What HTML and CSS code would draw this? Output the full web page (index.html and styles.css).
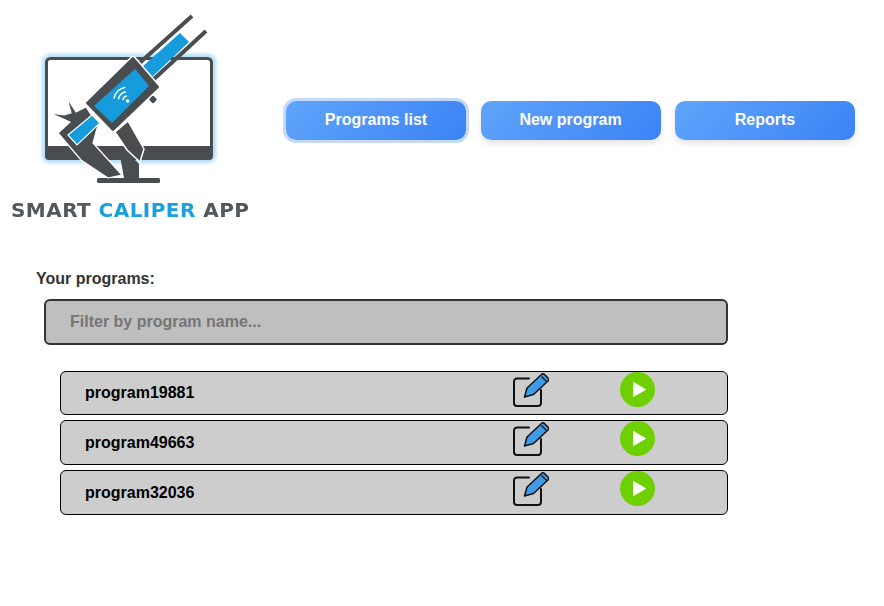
FILE: index.html
```html
<!DOCTYPE html>
<html lang="en">
<head>
  <meta charset="UTF-8" />
  <title>Smart Caliper App</title>
  <link rel="stylesheet" href="styles.css">
</head>
<body>
  <header class="top">
    <div class="logo">
      <svg class="logo-art" width="260" height="196" viewBox="0 0 260 196">
        <defs>
          <filter id="glow" x="-10%" y="-10%" width="120%" height="120%">
            <feGaussianBlur stdDeviation="2" />
          </filter>
          <filter id="soft" x="-5%" y="-5%" width="110%" height="110%">
            <feGaussianBlur stdDeviation="0.5" />
          </filter>
        </defs>
        <rect x="44.500" y="56.500" width="169" height="104" rx="5" fill="none" stroke="#5cb8f0" stroke-width="2.500" filter="url(#glow)" />
        <g filter="url(#soft)">
          <!-- monitor -->
          <rect x="46.500" y="58.500" width="165" height="100" rx="4" fill="#fff" stroke="#4a4d50" stroke-width="3" />
          <path d="M45 146h168v10a4 4 0 0 1-4 4H49a4 4 0 0 1-4-4z" fill="#4a4d50" />
          <path d="M120 156l7-4 12 12v14h-15z" fill="#4a4d50" />
          <rect x="97" y="178" width="63" height="5" rx="1.500" fill="#4a4d50" />

          <!-- rails and beam -->
          <path d="M192 16L134 68M206 31L154 79" stroke="#4a4d50" stroke-width="4" fill="none" />
          <path d="M180 33l9 9-37 35-10-10z" fill="#129bdc" />

          <!-- jaws -->
          <path d="M115 132l13-11 16 28-4 13-13-12z" fill="#4a4d50" stroke="#fff" stroke-width="1.500" />
          <path d="M67 98l9 14 10-5 12 18-5 18 29 32-14 3-27-18-23-27 12-11-20-9 14 2 7-2z" fill="#4a4d50" stroke="#fff" stroke-width="1.200" stroke-linejoin="round" />
          <path d="M68 135l24-20 8 8-23 22z" fill="#129bdc" stroke="#fff" stroke-width="1.200" />

          <!-- slider -->
          <path d="M133 58l25 29-45 43-26-27z" fill="#4a4d50" stroke="#fff" stroke-width="5" stroke-linejoin="round" />
          <path d="M133 58l25 29-45 43-26-27z" fill="#4a4d50" stroke="#4a4d50" stroke-width="2" stroke-linejoin="round" />
          <path d="M135 70l13 16-36 36-17-16z" fill="#129bdc" stroke="#129bdc" stroke-width="1.500" stroke-linejoin="round" />
          <rect x="150" y="96.500" width="6" height="6" rx="1.500" transform="rotate(45 153 99.500)" fill="#4a4d50" />

          <!-- wifi -->
          <path d="M113.900 98.500A14 14 0 0 1 125.300 87.200M118.400 99.300A9.500 9.500 0 0 1 126 91.700M122.800 100.100A5 5 0 0 1 126.800 96.100" stroke="#fff" stroke-width="1.500" fill="none" />
          <circle cx="127.700" cy="101" r="1.800" fill="#fff" />
        </g>
      </svg>
      <div class="logo-text">SMART <span class="logo-blue">CALIPER</span> APP</div>
    </div>
    <nav class="menu">
      <button class="menu-btn active">Programs list</button>
      <button class="menu-btn">New program</button>
      <button class="menu-btn">Reports</button>
    </nav>
  </header>

  <main class="content">
    <h2 class="title">Your programs:</h2>
    <input class="filter" type="text" placeholder="Filter by program name..." />

    <ul class="programs">
      <li class="program">
        <span class="program-name">program19881</span>
        <svg class="edit-icon" width="36" height="36" viewBox="0 0 36 36">
          <path d="M16 6.500H4a3 3 0 0 0-3 3V31a3 3 0 0 0 3 3h21a3 3 0 0 0 3-3V18" fill="none" stroke="#111" stroke-width="2" stroke-linecap="round" />
          <path d="M11.500 25l2.500-9L28.500 2.500a2 2 0 0 1 3 0l3.500 3.500a2 2 0 0 1 0 3L20.500 22.500z" fill="#3f9ae8" stroke="#111" stroke-width="1.500" stroke-linejoin="round" />
          <path d="M28.500 4.500l5 5" stroke="#111" stroke-width="1.200" fill="none" />
        </svg>
        <svg class="play-icon" width="36" height="36" viewBox="0 0 36 36">
          <circle cx="17.500" cy="17.500" r="17.500" fill="#6fd000" />
          <path d="M13.500 10.500l12 7-12 7z" fill="#fff" stroke="#fff" stroke-width="1" stroke-linejoin="round" />
        </svg>
      </li>
      <li class="program">
        <span class="program-name">program49663</span>
        <svg class="edit-icon" width="36" height="36" viewBox="0 0 36 36">
          <path d="M16 6.500H4a3 3 0 0 0-3 3V31a3 3 0 0 0 3 3h21a3 3 0 0 0 3-3V18" fill="none" stroke="#111" stroke-width="2" stroke-linecap="round" />
          <path d="M11.500 25l2.500-9L28.500 2.500a2 2 0 0 1 3 0l3.500 3.500a2 2 0 0 1 0 3L20.500 22.500z" fill="#3f9ae8" stroke="#111" stroke-width="1.500" stroke-linejoin="round" />
          <path d="M28.500 4.500l5 5" stroke="#111" stroke-width="1.200" fill="none" />
        </svg>
        <svg class="play-icon" width="36" height="36" viewBox="0 0 36 36">
          <circle cx="17.500" cy="17.500" r="17.500" fill="#6fd000" />
          <path d="M13.500 10.500l12 7-12 7z" fill="#fff" stroke="#fff" stroke-width="1" stroke-linejoin="round" />
        </svg>
      </li>
      <li class="program">
        <span class="program-name">program32036</span>
        <svg class="edit-icon" width="36" height="36" viewBox="0 0 36 36">
          <path d="M16 6.500H4a3 3 0 0 0-3 3V31a3 3 0 0 0 3 3h21a3 3 0 0 0 3-3V18" fill="none" stroke="#111" stroke-width="2" stroke-linecap="round" />
          <path d="M11.500 25l2.500-9L28.500 2.500a2 2 0 0 1 3 0l3.500 3.500a2 2 0 0 1 0 3L20.500 22.500z" fill="#3f9ae8" stroke="#111" stroke-width="1.500" stroke-linejoin="round" />
          <path d="M28.500 4.500l5 5" stroke="#111" stroke-width="1.200" fill="none" />
        </svg>
        <svg class="play-icon" width="36" height="36" viewBox="0 0 36 36">
          <circle cx="17.500" cy="17.500" r="17.500" fill="#6fd000" />
          <path d="M13.500 10.500l12 7-12 7z" fill="#fff" stroke="#fff" stroke-width="1" stroke-linejoin="round" />
        </svg>
      </li>
    </ul>
  </main>
</body>
</html>
```

FILE: styles.css
```css
* {
  box-sizing: border-box;
  font-family: 'Liberation Sans', Arial, sans-serif;
  margin: 0;
  padding: 0;
}

body {
  background: #fff;
  color: #333;
}

.top {
  display: flex;
  align-items: flex-start;
}

.logo {
  width: 260px;
}

.logo-art {
  display: block;
}

.logo-text {
  padding-left: 11px;
  font-family: 'DejaVu Sans', sans-serif;
  font-size: 20px;
  font-weight: 700;
  line-height: 28px;
  letter-spacing: 0.450px;
  white-space: nowrap;
  color: #55585a;
  filter: blur(0.3px);
}

.logo-blue {
  font-family: inherit;
  color: #1a9fe0;
}

.menu {
  display: flex;
  gap: 14.500px;
  padding: 101px 0 0 26px;
}

.menu-btn {
  width: 180px;
  height: 39px;
  padding-bottom: 2px;
  border: none;
  border-radius: 10px;
  background: linear-gradient(135deg, #60a5fa, #3b82f6);
  color: #fff;
  font-size: 16px;
  font-weight: 700;
  box-shadow: 0 4px 6px rgba(0, 0, 0, 0.1);
  cursor: pointer;
}

.menu-btn.active {
  box-shadow: 0 0 0 3px rgba(59, 130, 246, 0.3);
}

.content {
  padding: 46px 156px 0 36px;
}

.title {
  font-size: 16px;
  font-weight: 700;
  line-height: 18px;
  color: #333;
}

.filter {
  display: block;
  width: 684px;
  height: 46px;
  margin: 11px 0 0 8px;
  padding: 0 24px;
  border: 2px solid #333;
  border-radius: 6px;
  background: #bfbfbf;
  font-size: 16px;
  font-weight: 700;
  outline: none;
}

.filter::placeholder {
  color: #757575;
}

.programs {
  list-style: none;
  margin: 25.800px 0 0 24px;
}

.program {
  display: flex;
  align-items: flex-start;
  width: 668px;
  height: 44.600px;
  margin-bottom: 5px;
  padding-left: 24px;
  border: 1px solid #000;
  border-radius: 6px;
  background: #cdcdcd;
}

.program-name {
  width: 428px;
  align-self: center;
  padding-top: 0.800px;
  font-size: 16px;
  font-weight: 700;
  color: #000;
}

.play-icon {
  margin-left: 70.500px;
}
```
